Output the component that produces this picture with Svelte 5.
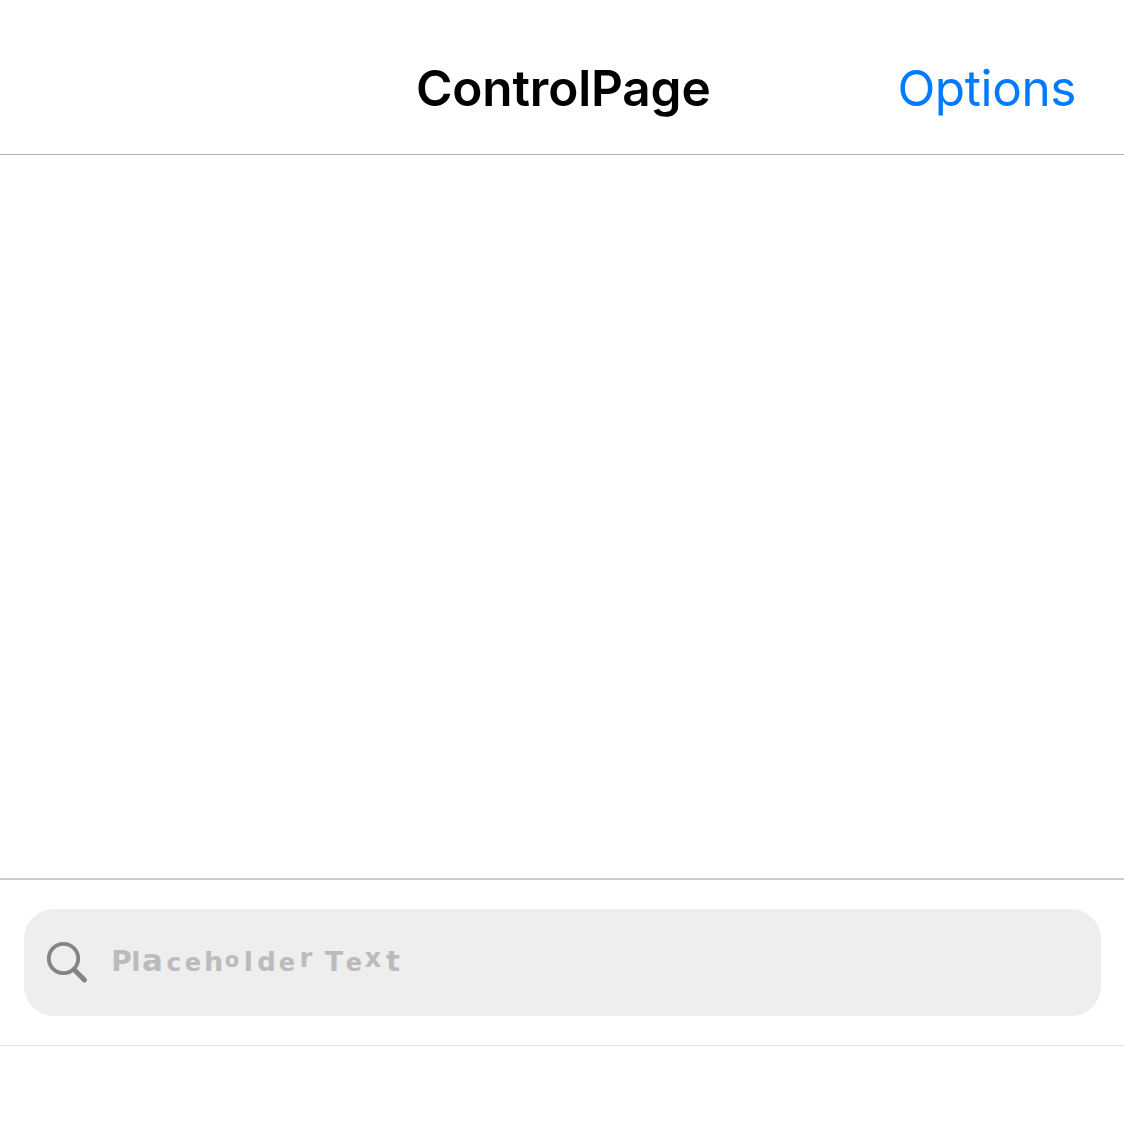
<script>
  // Hand-lettered hint: character, centre x, baseline y, size
  const letters = [
    ['P', 20.5, 33, 28], ['l', 35, 33, 27], ['a', 51.5, 33, 31], ['c', 73, 33, 25],
    ['e', 92, 33, 24], ['h', 112.5, 33, 27], ['o', 131, 28.5, 21], ['l', 147.5, 33, 27],
    ['d', 165.5, 33, 26], ['e', 186, 33, 24], ['r', 205, 29, 26], [' ', 217, 33, 26],
    ['T', 233, 33, 27], ['e', 253, 33, 24], ['x', 272, 29, 26], ['t', 292, 33, 29]
  ];
</script>

<main>
  <header>
    <span></span>
    <h1>ControlPage</h1>
    <button>Options</button>
  </header>
  <section></section>
  <div class="search">
    <label>
      <svg width="44" height="44" viewBox="0 0 44 44" fill="none" stroke="#848488">
        <circle cx="18.500" cy="17.500" r="14.700" stroke-width="3.800" />
        <path d="M29 28.500L39.500 39" stroke-width="5" stroke-linecap="round" />
      </svg>
      <svg class="hint" width="310" height="50" viewBox="0 0 310 50">
        <text>{#each letters as [ch, x, y, size]}<tspan {x} {y} font-size={size}>{ch}</tspan>{/each}</text>
      </svg>
    </label>
  </div>
</main>

<style>
  :global(body) { background: #fff; }
  main { height: 1126px; display: flex; flex-direction: column; font-family: Inter, sans-serif; }
  header { box-sizing: border-box; height: 155px; padding: 21px 48px 0 0; display: grid; grid-template-columns: 416px 1fr auto; align-items: center; border-bottom: 1px solid #b3b3b3; }
  h1 { margin: 0; font-size: 49.5px; font-weight: 600; letter-spacing: -0.15px; }
  button { border: 0; padding: 0; background: none; color: #007aff; font: 400 49.5px Inter, sans-serif; letter-spacing: -0.4px; }
  section { height: 723px; }
  .search { box-sizing: border-box; height: 168px; padding: 29px 23px 29px 24px; border-top: 2px solid #ccc; border-bottom: 1px solid #e2e2e2; }
  label { height: 107px; display: flex; align-items: center; background: #eee; border-radius: 30px; padding-left: 21px; }
  .hint { margin-left: 12px; font-family: "DejaVu Sans", sans-serif; font-weight: 700; fill: #bbbbbd; }
  text { text-anchor: middle; white-space: pre; }
</style>
